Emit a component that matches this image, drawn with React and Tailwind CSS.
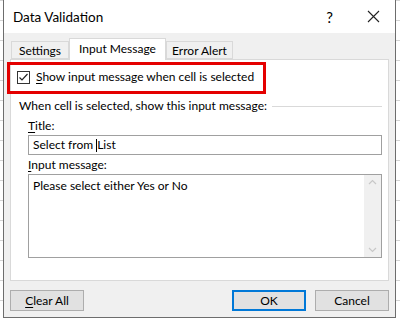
import React from "react";

const font = { fontFamily: 'Lato, "Noto Sans", Arial, sans-serif' };

function Tab({ label, active, width }) {
  return active ? (
    <div
      className={`relative z-10 -mb-px h-[22px] border border-b-0 border-[#d9d9d9] bg-white pt-[2px] text-center ${width}`}
    >
      {label}
    </div>
  ) : (
    <div
      className={`h-[18px] border border-[#d9d9d9] bg-[#f0f0f0] text-center leading-[17px] ${width}`}
    >
      {label}
    </div>
  );
}

function Button({ children, primary, className = "" }) {
  return (
    <div
      className={
        "flex h-[21px] w-[74px] items-center justify-center bg-[#e1e1e1] " +
        (primary ? "border-2 border-[#0078d7]" : "border border-[#adadad]") +
        " " +
        className
      }
    >
      {children}
    </div>
  );
}

export default function App() {
  return (
    <div
      className="flex h-[320px] w-[400px] bg-white bg-[linear-gradient(#d4d4d4_1px,transparent_1px)] bg-[length:100%_20px] text-[12px] leading-[16px] text-black"
      style={font}
    >
      <div className="ml-[3px] flex h-[318px] w-[393px] flex-col border border-t-0 border-[#6d6d6d] bg-[#f0f0f0]">
        {/* title bar */}
        <div className="flex h-[33px] items-center bg-white pl-[9px]">
          <span className="text-[13.5px]">Data Validation</span>
          <span className="ml-auto mr-[34px] text-[15px]">?</span>
          <svg className="mr-[15px]" width="13" height="13" viewBox="0 0 13 13">
            <path d="M1 1L12 12M12 1L1 12" stroke="#222" strokeWidth="1.1" />
          </svg>
        </div>

        {/* tabs */}
        <div className="flex items-end pl-[7px] pt-[5px]">
          <Tab label="Settings" width="w-[58px]" />
          <Tab label="Input Message" active width="w-[97px]" />
          <Tab label="Error Alert" width="w-[67px]" />
        </div>

        {/* panel */}
        <div className="relative ml-[6px] flex h-[222px] w-[379px] flex-col border border-[#d9d9d9] bg-white">
          <div className="flex h-[32px] items-center gap-[6px] pl-[6px] pt-[2px]">
            <div className="flex h-[13px] w-[13px] items-center justify-center border border-[#333] bg-white">
              <svg width="11" height="11" viewBox="0 0 11 11">
                <path d="M1.5 5.5L4 8L9.5 2" fill="none" stroke="#222" strokeWidth="1.2" />
              </svg>
            </div>
            <span>
              <span className="underline underline-offset-2">S</span>how input message when cell is selected
            </span>
          </div>
          <div className="pointer-events-none absolute left-[-4px] top-[2px] h-[32px] w-[259px] border-[3px] border-[#e40000]" />

          <div className="mt-[6px] flex h-[16px] items-center pl-[8px] pr-[6px]">
            <span>When cell is selected, show this input message:</span>
            <div className="ml-[5px] h-px flex-1 bg-[#d9d9d9]" />
          </div>

          <div className="mt-[4px] h-[16px] pl-[17px]">
            <span className="underline underline-offset-2">T</span>itle:
          </div>
          <div className="ml-[17px] mt-[1px] flex h-[20px] w-[354px] items-center whitespace-pre border border-[#a0a0a0] pl-[4px]">
            {"Select from "}
            <span className="inline-block h-[13px] w-px bg-black" />
            List
          </div>

          <div className="mt-[2px] h-[16px] pl-[17px]">
            <span className="underline underline-offset-2">I</span>nput message:
          </div>
          <div className="ml-[17px] mt-[1px] flex h-[84px] w-[354px] border border-[#a0a0a0]">
            <div className="flex-1 pl-[4px] pt-[3px]">Please select either Yes or No</div>
            <div className="flex w-[17px] flex-col items-center justify-between bg-[#f0f0f0] py-[4px]">
              <svg width="9" height="6" viewBox="0 0 9 6">
                <path d="M1 5L4.5 1.5L8 5" fill="none" stroke="#c8c8c8" strokeWidth="1.2" />
              </svg>
              <svg width="9" height="6" viewBox="0 0 9 6">
                <path d="M1 1L4.5 4.5L8 1" fill="none" stroke="#c8c8c8" strokeWidth="1.2" />
              </svg>
            </div>
          </div>
        </div>

        {/* buttons */}
        <div className="mt-[9px] flex pl-[6px]">
          <Button>
            <span>
              <span className="underline underline-offset-2">C</span>lear All
            </span>
          </Button>
          <Button primary className="ml-auto">OK</Button>
          <Button className="ml-[9px] mr-[6px]">Cancel</Button>
        </div>
      </div>
    </div>
  );
}
